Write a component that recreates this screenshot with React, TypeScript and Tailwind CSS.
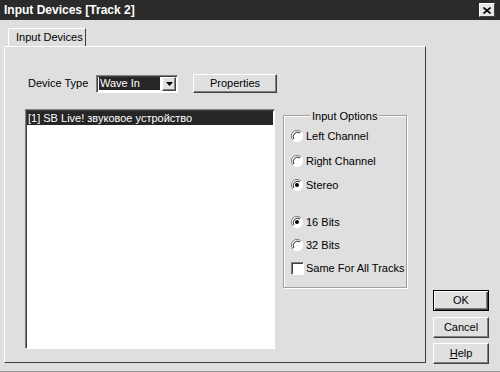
import React from "react";

const raised =
  "border border-t-white border-l-white border-r-[#404040] border-b-[#404040] shadow-[inset_-1px_-1px_0_#808080]";
const sunken =
  "border border-t-[#808080] border-l-[#808080] border-r-white border-b-white shadow-[inset_1px_1px_0_#404040]";

function Radio({ checked }: { checked?: boolean }) {
  return (
    <svg width="12" height="12" viewBox="0 0 12 12" className="shrink-0">
      <circle cx="6" cy="6" r="5.5" fill="#ffffff" />
      <path d="M10 2 A5.5 5.5 0 0 0 2 10" fill="none" stroke="#808080" strokeWidth="1" />
      <path d="M9 3 A4.3 4.3 0 0 0 3 9" fill="none" stroke="#303030" strokeWidth="1" />
      <path d="M2 10 A5.5 5.5 0 0 0 10 2" fill="none" stroke="#ffffff" strokeWidth="1" />
      {checked && <circle cx="6" cy="6" r="2" fill="#000000" />}
    </svg>
  );
}

function Option({ label, checked, className }: { label: string; checked?: boolean; className: string }) {
  return (
    <div className={`h-[14px] flex items-center gap-[3px] ${className}`}>
      <Radio checked={checked} />
      <span>{label}</span>
    </div>
  );
}

function Button({ children, isDefault, className = "" }: { children: React.ReactNode; isDefault?: boolean; className?: string }) {
  const style = isDefault
    ? "border border-black shadow-[inset_1px_1px_0_white,inset_-1px_-1px_0_#404040,inset_-2px_-2px_0_#808080]"
    : raised;
  return (
    <div className={`flex items-center justify-center bg-[#e0e0e0] ${style} ${className}`}>
      {children}
    </div>
  );
}

export default function App() {
  return (
    <div className="w-[500px] h-[372px] bg-[#dfdfdf] flex flex-col text-[11px] text-black border-b border-[#9a9a9a] font-['Liberation_Sans',Arial,sans-serif]">
      <div className="h-[20px] bg-[#2b2b2b] flex items-center justify-between pl-[4px] pr-[5px] shrink-0">
        <span className="text-white font-bold text-[12px]">Input Devices [Track 2]</span>
        <div className="w-[16px] h-[14px] bg-[#e6e6e6] flex items-center justify-center border border-t-white border-l-white border-r-[#404040] border-b-[#404040]">
          <svg width="8" height="7" viewBox="0 0 8 7">
            <path d="M0.5 0.5 L7.5 6.5 M7.5 0.5 L0.5 6.5" stroke="#000" strokeWidth="1.6" />
          </svg>
        </div>
      </div>

      <div className="flex flex-1 pl-[4px]">
        <div className="flex flex-col pt-[8px]">
          <div className="flex pl-[4px]">
            <div className="h-[18px] w-[78px] border-t border-l border-t-white border-l-white border-r border-r-[#404040] pl-[7px] flex items-center">
              Input Devices
            </div>
          </div>
          <div className="w-[422px] h-[317px] border border-t-white border-l-white border-r-[#404040] border-b-[#404040] pl-[20px] pt-[27px]">
            <div className="flex items-center">
              <span className="w-[71px] pl-[3px]">Device Type</span>
              <div className={`w-[82px] h-[18px] bg-white flex items-center pl-[2px] pr-[1px] ${sunken}`}>
                <div className="flex-1 h-[13px] bg-[#262626] text-white flex items-center pl-[1px] leading-none">Wave In</div>
                <div className={`w-[14px] h-[14px] ml-[2px] bg-[#e0e0e0] flex items-center justify-center ${raised}`}>
                  <svg width="7" height="4" viewBox="0 0 7 4">
                    <path d="M0 0 H7 L3.5 4 Z" fill="#000" />
                  </svg>
                </div>
              </div>
              <Button className="ml-[15px] w-[84px] h-[19px]">Properties</Button>
            </div>

            <div className="flex mt-[16px]">
              <div className={`w-[250px] h-[240px] bg-white pt-[1px] pl-[1px] ${sunken}`}>
                <div className="h-[14px] bg-[#262626] text-white flex items-center pl-[1px] mr-[1px]">
                  [1] SB Live! звуковое устройство
                </div>
              </div>

              <div className="relative ml-[8px] mt-[6px] w-[124px] h-[173px] border border-[#a0a0a0] shadow-[inset_1px_1px_0_white,1px_1px_0_white] pl-[7px] pt-[13px]">
                <span className="absolute left-[26px] -top-[8px] bg-[#dfdfdf] px-[2px]">Input Options</span>
                <Option label="Left Channel" className="" />
                <Option label="Right Channel" className="mt-[11px]" />
                <Option label="Stereo" checked className="mt-[10px]" />
                <Option label="16 Bits" checked className="mt-[23px]" />
                <Option label="32 Bits" className="mt-[9px]" />
                <div className="h-[14px] flex items-center gap-[2px] mt-[9px]">
                  <div className={`w-[13px] h-[13px] bg-white shrink-0 ${sunken}`} />
                  <span>Same For All Tracks</span>
                </div>
              </div>
            </div>
          </div>
        </div>

        <div className="flex flex-col justify-end pb-[7px] ml-[7px]">
          <Button isDefault className="w-[56px] h-[21px]">OK</Button>
          <Button className="w-[56px] h-[21px] mt-[6px]">Cancel</Button>
          <Button className="w-[56px] h-[21px] mt-[5px]">
            <span>
              <span className="underline">H</span>elp
            </span>
          </Button>
        </div>
      </div>
    </div>
  );
}
